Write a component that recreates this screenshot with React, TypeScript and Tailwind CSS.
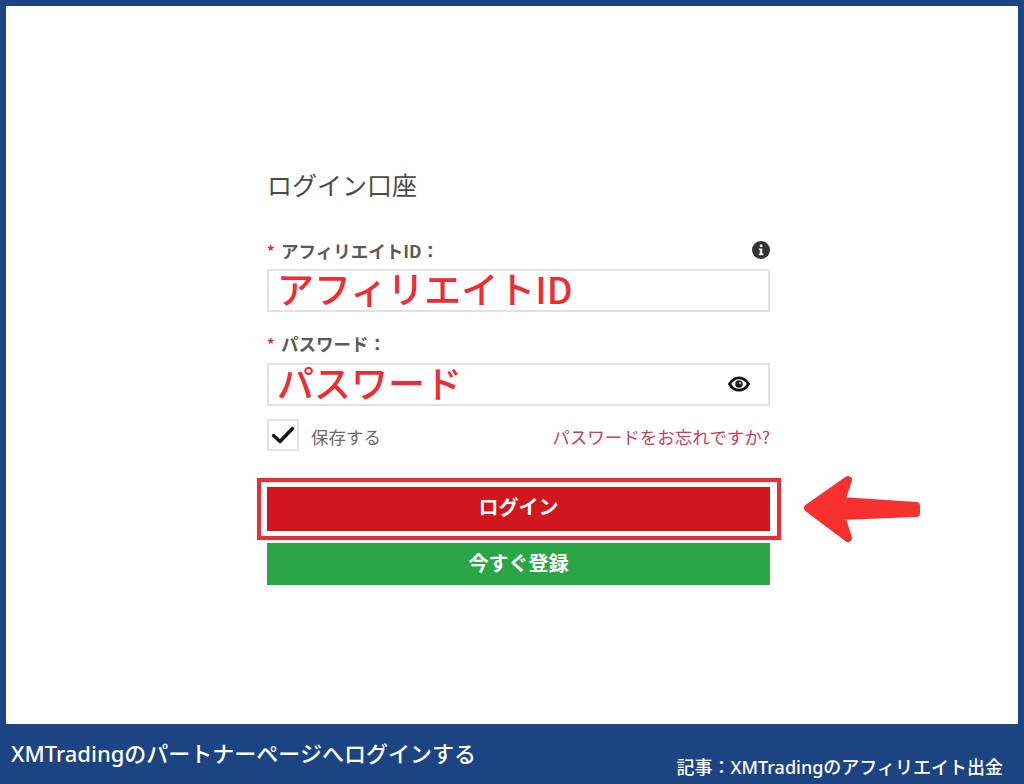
const jp = "font-['Noto_Sans_CJK_JP',sans-serif]";

const InfoIcon = () => (
  <svg width="20" height="20" viewBox="0 0 20 20">
    <circle cx="10" cy="10" r="9" fill="#333333" />
    <rect x="8.800" y="4.400" width="2.600" height="2.600" rx="0.600" fill="#e8e8e8" />
    <path d="M7.800 8.400h3.500v5.200h1.100v1.600H7.800v-1.600h1v-3.600h-1z" fill="#e8e8e8" />
  </svg>
);

const EyeIcon = () => (
  <svg width="22" height="16" viewBox="0 0 22 16">
    <path d="M1.500 8C4 3.800 7.200 1.800 11 1.800S18 3.800 20.500 8C18 12.200 14.800 14.200 11 14.200S4 12.200 1.500 8Z" fill="none" stroke="#111111" strokeWidth="2.800" strokeLinejoin="round" />
    <circle cx="11" cy="8" r="3.800" fill="#222222" />
    <circle cx="12" cy="7" r="1.200" fill="#aaaaaa" />
  </svg>
);

const CheckIcon = () => (
  <svg width="24" height="20" viewBox="0 0 24 20">
    <path d="M2.500 10.500L9 16.500L21.500 3.500" fill="none" stroke="#111111" strokeWidth="3.400" strokeLinecap="round" strokeLinejoin="round" />
  </svg>
);

const App = () => {
  return (
    <div className={`relative w-[1024px] h-[784px] flex flex-col bg-[#1c4482] overflow-hidden ${jp}`}>
      {/* Form area */}
      <div className="h-[718px] mt-[6px] mx-[6px] bg-white pl-[261px] pt-[161px]">
        <div className="w-[503px] flex flex-col">
          <h2 className="h-[34px] text-[25px] leading-[34px] text-[#4a4a4a]">ログイン口座</h2>

          <div className="mt-[39px] h-[29px] flex items-start justify-between">
            <div className="flex items-center h-[22px] text-[17.500px] font-bold text-[#5a5a5a]">
              <span className="text-[#d2303f] w-[14px] font-bold text-[15px]">*</span>
              アフィリエイトID：
            </div>
            <div className="-mr-[1px]">
              <InfoIcon />
            </div>
          </div>
          <div className="h-[43px] border-2 border-[#e2e2e2] flex items-center pl-[8px] pb-[4px]">
            <span className="text-[37px] leading-none font-medium text-[#ee2c33]">アフィリエイトID</span>
          </div>

          <div className="mt-[21px] h-[30px] flex items-start">
            <div className="flex items-center h-[22px] text-[17.500px] font-bold text-[#5a5a5a]">
              <span className="text-[#d2303f] w-[14px] font-bold text-[15px]">*</span>
              パスワード：
            </div>
          </div>
          <div className="h-[43px] border-2 border-[#e2e2e2] flex items-center justify-between pl-[8px] pr-[18px]">
            <span className="text-[37px] leading-none font-medium text-[#ee2c33] mb-[4px]">パスワード</span>
            <div className="mb-[2px]">
              <EyeIcon />
            </div>
          </div>

          <div className="mt-[13px] h-[32px] flex items-center justify-between">
            <div className="flex items-center">
              <div className="w-[32px] h-[32px] border-2 border-[#e2e2e2] flex items-center justify-center">
                <CheckIcon />
              </div>
              <span className="ml-[12px] pt-[4px] text-[17.500px] text-[#6b6b6b]">保存する</span>
            </div>
            <a className="pt-[4px] text-[17.500px] text-[#c9405a]">パスワードをお忘れですか?</a>
          </div>

          {/* Red frame around the login button */}
          <div className="mt-[27px] -ml-[10px] -mr-[11px] h-[62px] border-[4px] border-[#ee2c33] pl-[6px] pr-[7px] py-[5px]">
            <button className="w-full h-full bg-[#d2161e] text-white text-[20px] font-bold pb-[4px]">ログイン</button>
          </div>
          <button className="mt-[3px] h-[42px] bg-[#2aa646] text-white text-[20px] font-bold pb-[2px]">今すぐ登録</button>
        </div>
      </div>

      {/* Caption bar */}
      <div className="flex-1 flex justify-between pl-[11px] pr-[21px] text-white font-['Noto_Sans','Noto_Sans_CJK_JP',sans-serif]">
        <span className="mt-[14px] h-[30px] text-[22px] leading-[30px] font-medium">XMTradingのパートナーページへログインする</span>
        <span className="mt-[31px] h-[24px] text-[18px] leading-[24px] font-medium">記事：XMTradingのアフィリエイト出金</span>
      </div>

      {/* Arrow annotation */}
      <svg className="absolute left-[798px] top-[470px]" width="128" height="78" viewBox="0 0 128 78">
        <path d="M50 10L10 38L50 68L43 46L118 43V36L43 31Z" fill="#f5302f" stroke="#f5302f" strokeWidth="8" strokeLinejoin="round" />
      </svg>
    </div>
  );
};

export default App;
